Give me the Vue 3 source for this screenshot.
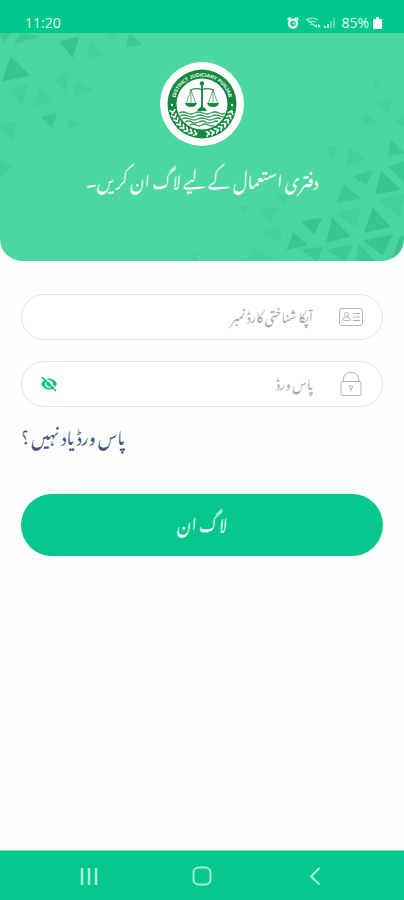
<template>
  <div class="screen">
    <header class="status-bar">
      <span class="clock">11:20</span>
      <div class="status-icons">
        <svg class="icon-alarm" viewBox="0 0 12 12" width="12" height="12">
          <path d="M1 3V1h3l-3 2zM11 3V1H8l3 2z" fill="#e6fff6" stroke="#e6fff6" />
          <circle cx="6" cy="6.5" r="4" fill="none" stroke="#e6fff6" stroke-width="2.4" />
          <path d="M6 4.5v2.300h2" fill="none" stroke="#e6fff6" />
        </svg>
        <svg viewBox="0 0 32 14" width="32" height="14">
          <g fill="none" stroke="#a5ecd2" stroke-width="1.1">
            <path d="M1 4q6-4 12 0M3 6.500q4-3 8 0M5 9q2-2 4 0M2 3l9 8" />
          </g>
          <path d="M10 10l2-2v4zM13 8l3 2-3 2z" fill="#d5f9ec" />
          <path d="M19 10h2v2h-2zM22 8h2v4h-2z" fill="#b7f1dc" />
          <path d="M25 5h2v7h-2zM28 2h2v10h-2z" fill="#5cdcb3" />
        </svg>
        <span class="battery-text">85%</span>
        <svg viewBox="0 0 9 12" width="9" height="12">
          <path d="M3 0h3v2h2q1 0 1 1v8q0 1-1 1H1q-1 0-1-1V3q0-1 1-1h2z" fill="#fff" />
        </svg>
      </div>
    </header>

    <section class="banner">
      <svg class="pattern" viewBox="0 99 1212 684" preserveAspectRatio="xMidYMid slice" aria-hidden="true">
        <polygon
          v-for="(t, i) in triangles"
          :key="i"
          :points="t.points"
          :opacity="t.opacity"
          fill="#1fb477"
          stroke="#1fb477"
          stroke-width="3"
        />
      </svg>
      <svg class="logo" viewBox="0 0 84 84" role="img" aria-label="District Judiciary Punjab">
        <defs>
          <path id="ring-text" d="M14.600 45.500A27.600 27.600 0 1 1 69.400 45.500" />
        </defs>
        <circle cx="42" cy="42" r="42" fill="#fff" />
        <circle cx="42" cy="42" r="34.500" fill="#13893f" />
        <circle cx="42" cy="42" r="25.500" fill="#fff" />
        <text class="ring-label">
          <textPath href="#ring-text" startOffset="50%" text-anchor="middle">DISTRICT JUDICIARY PUNJAB</textPath>
        </text>
        <circle cx="12" cy="43" r="1.200" fill="#fff" />
        <circle cx="72" cy="43" r="1.200" fill="#fff" />
        <g v-for="a in leafAngles" :key="a" :transform="`rotate(${a} 42 42)`">
          <path d="M39.800 69.500q3 1 3 4.500M39.800 75q1.500-2.500 4-3" fill="none" stroke="#fff" stroke-width="1.500" />
        </g>
        <path d="M42 68v8" stroke="#13893f" stroke-width="3" />
        <g fill="none" stroke="#2b8d54" stroke-width="1">
          <path d="M42 22v24" stroke-width="2" />
          <path d="M30 28q6-2 10-1l2 1 2-1q4-1 10 1" stroke-width="1.300" />
          <path d="M31 28l-5 14M31 28l5 14M53 28l-5 14M53 28l5 14M31 28v13M53 28v13" stroke-width=".7" />
        </g>
        <g fill="#13893f">
          <circle cx="42" cy="21.500" r="2.200" />
          <path d="M25 41h12q-1 4-6 4t-6-4zM47 41h12q-1 4-6 4t-6-4zM37 49q1-3 4-4h2q3 1 4 4z" />
        </g>
        <g fill="none" stroke="#2e9a5a" stroke-width="1.300">
          <path d="M19 51q4-2 8 0t8 0 8 0 8 0 8 0 6 0" />
          <path d="M20 54q4-2 8 0t8 0 8 0 8 0 8 0 3 0" />
          <path d="M22 57q4-2 8 0t8 0 8 0 8 0 7 0" />
          <path d="M25 60q4-2 7 0t7 0 7 0 7 0 5 0" />
          <path d="M30 63q3-2 6 0t6 0 6 0 6 0" />
        </g>
      </svg>
      <h1 class="banner-title" dir="rtl">دفتری استعمال کے لیے لاگ ان کریں۔</h1>
    </section>

    <form class="login-form" dir="rtl" @submit.prevent>
      <div class="field">
        <svg class="field-icon" viewBox="0 0 24 24" width="24" height="24" fill="none" stroke="#b5b5b5">
          <rect x=".5" y="3.500" width="23" height="17" rx="2.500" />
          <circle cx="7.500" cy="9.500" r="2" />
          <path d="M3.500 15.500q0-3.500 4-3.500t4 3.500M5 15.500h5M14 8.500h7M14 12h7M14 15.500h7" />
        </svg>
        <input v-model="cnic" type="text" placeholder="آپکا شناختی کارڈ نمبر" aria-label="آپکا شناختی کارڈ نمبر" />
      </div>
      <div class="field">
        <svg class="field-icon" viewBox="0 0 24 24" width="24" height="24" fill="none" stroke="#b5b5b5">
          <rect x="2" y="9.500" width="20" height="14" rx="1.500" />
          <path d="M4 9.500Q4 .5 12 .5t8 9" />
          <circle cx="12" cy="15" r="1.500" />
          <path d="M12 16.500v3" />
        </svg>
        <input
          v-model="password"
          :type="showPassword ? 'text' : 'password'"
          placeholder="پاس ورڈ"
          aria-label="پاس ورڈ"
        />
        <button class="eye" type="button" aria-label="پاس ورڈ دکھائیں" @click="showPassword = !showPassword">
          <svg viewBox="0 0 16 16" width="16" height="16">
            <path d="M0 8q3-5.500 8-5.500t8 5.500q-3 5.500-8 5.500T0 8z" fill="#0abf87" />
            <circle cx="8" cy="8" r="3.200" fill="#0abf87" stroke="#fff" stroke-width="1.300" />
            <path d="M2.500 0l14 14" stroke="#fff" stroke-width="1.200" />
            <path d="M1 1l14 14" stroke="#0abf87" stroke-width="1.500" />
          </svg>
        </button>
      </div>
      <a class="forgot" href="#">پاس ورڈ یاد نہیں ؟</a>
      <button class="submit" type="submit">لاگ ان</button>
    </form>

    <nav class="nav-bar">
      <button type="button" aria-label="Recents">
        <svg viewBox="0 0 20 20" width="20" height="20" stroke="#a8efd6" stroke-width="2.500">
          <path d="M3 2v17M10 2v17M17 2v17" />
        </svg>
      </button>
      <button type="button" aria-label="Home">
        <svg viewBox="0 0 20 20" width="20" height="20" fill="none" stroke="#a8efd6" stroke-width="2">
          <rect x="1.500" y="1.500" width="17" height="17" rx="5" />
        </svg>
      </button>
      <button type="button" aria-label="Back">
        <svg viewBox="0 0 20 20" width="20" height="20" fill="none" stroke="#a8efd6" stroke-width="2">
          <path d="M14.500 2L6 10.500l8.500 8" />
        </svg>
      </button>
    </nav>
  </div>
</template>

<script setup>
import { ref } from 'vue'

const cnic = ref('')
const password = ref('')
const showPassword = ref(false)

const leafAngles = [-75, -66, -57, -48, -39, -30, -21, -12, 12, 21, 30, 39, 48, 57, 66, 75]

const groups = [
  {
    opacity: 0.45,
    list: [
      '32,172 88,225 8,243',
      '180,125 235,112 218,172',
      '1119,625 1170,680 1094,697',
      '906,665 964,655 942,702',
      '997,655 1050,708 980,727',
      '880,698 920,735 862,748',
      '1092,722 1177,705 1147,765',
      '1144,515 1200,568 1127,582',
      '1200,712 1212,705 1212,783 1175,783'
    ]
  },
  {
    opacity: 0.32,
    list: [
      '0,99 30,99 12,128',
      '60,99 115,110 45,130',
      '390,105 425,132 378,140',
      '125,352 170,340 155,382',
      '1060,530 1117,513 1099,555',
      '1032,555 1080,595 1012,607',
      '1167,502 1212,485 1212,545',
      '1077,735 1125,783 1067,783',
      '982,750 1057,735 1034,783',
      '907,750 967,742 952,783',
      '1172,420 1212,460 1167,465'
    ]
  },
  {
    opacity: 0.14,
    list: [
      '270,125 310,162 262,178',
      '30,270 85,255 65,315',
      '120,265 155,305 100,320',
      '165,240 205,220 195,275',
      '230,245 275,270 222,285',
      '0,380 50,365 35,420',
      '210,355 235,375 205,390',
      '0,480 40,500 0,530',
      '320,99 350,99 340,128',
      '1012,640 1084,625 1065,680',
      '1140,600 1212,585 1200,655',
      '827,580 872,580 852,615',
      '780,630 835,625 810,665',
      '790,700 840,685 840,725',
      '720,620 748,620 735,635',
      '760,745 820,775 745,783',
      '985,440 1010,445 995,475',
      '1050,445 1095,480 1040,495',
      '1128,308 1174,296 1163,338',
      '1095,340 1130,370 1090,375',
      '1125,240 1140,250 1122,265',
      '1185,370 1212,340 1212,380',
      '560,770 590,765 590,783'
    ]
  }
]

const triangles = groups.flatMap((g) => g.list.map((points) => ({ points, opacity: g.opacity })))
</script>

<style>
body {
  margin: 0;
  background: #fff;
}
</style>

<style scoped>
.screen {
  min-height: 100vh;
  display: flex;
  flex-direction: column;
  background: #fefefe;
  font-family: 'Noto Nastaliq Urdu', 'DejaVu Sans', sans-serif;
}

.status-bar {
  height: 33px;
  box-sizing: border-box;
  padding: 12px 22px 0 25px;
  display: flex;
  justify-content: space-between;
  align-items: center;
  background: #00c78c;
  color: #e6fff6;
  font-family: 'Open Sans', 'Noto Sans', sans-serif;
  font-size: 14px;
}

.status-icons {
  display: flex;
  align-items: center;
  gap: 4px;
}

.icon-alarm {
  margin-right: 2px;
}

.banner {
  position: relative;
  height: 228px;
  box-sizing: border-box;
  padding-top: 29px;
  display: flex;
  flex-direction: column;
  align-items: center;
  gap: 18px;
  overflow: hidden;
  background: #4bd6a2;
  border-radius: 0 0 22px 22px;
}

.pattern {
  position: absolute;
  inset: 0;
  width: 100%;
  height: 100%;
}

.logo {
  position: relative;
  width: 84px;
  height: 84px;
}

.ring-label {
  fill: #fff;
  font-family: 'Liberation Sans', sans-serif;
  font-size: 5px;
  font-weight: 700;
}

.banner-title {
  position: relative;
  margin: 0;
  color: #fff;
  font-size: 17px;
  font-weight: 400;
  line-height: 28px;
}

.login-form {
  flex: 1;
  padding: 33px 21px 0;
  display: flex;
  flex-direction: column;
}

.field {
  height: 46px;
  box-sizing: border-box;
  margin-bottom: 21px;
  padding: 0 19px;
  display: flex;
  align-items: center;
  gap: 26px;
  background: #fff;
  border: 1px solid #e0e6e6;
  border-radius: 23px;
}

.field-icon {
  flex: none;
}

.field input {
  flex: 1;
  min-width: 0;
  padding: 0 0 6px;
  border: 0;
  outline: 0;
  background: none;
  color: #555;
  font-family: inherit;
  font-size: 13px;
}

.field input::placeholder {
  color: #a8a8a8;
  opacity: 1;
}

.eye {
  display: flex;
  padding: 0;
  border: 0;
  background: none;
}

.forgot {
  align-self: flex-end;
  margin-top: -6px;
  color: #3f5680;
  font-size: 17px;
  line-height: 24px;
  text-decoration: none;
}

.submit {
  height: 62px;
  margin-top: 48px;
  padding: 0 0 8px;
  border: 0;
  border-radius: 31px;
  background: #04c78d;
  color: #fff;
  font-family: inherit;
  font-size: 17px;
}

.nav-bar {
  height: 50px;
  box-sizing: border-box;
  padding: 0 32px;
  display: flex;
  background: #04c78d;
  border-top: 1px solid #7fdcbd;
}

.nav-bar button {
  flex: 1;
  display: flex;
  align-items: center;
  justify-content: center;
  padding: 0;
  border: 0;
  background: none;
}
</style>
